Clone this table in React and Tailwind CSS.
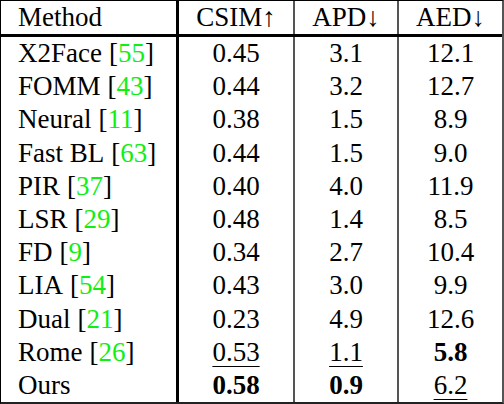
const rows = [
  { name: 'X2Face', ref: '55', csim: '0.45', apd: '3.1', aed: '12.1' },
  { name: 'FOMM', ref: '43', csim: '0.44', apd: '3.2', aed: '12.7' },
  { name: 'Neural', ref: '11', csim: '0.38', apd: '1.5', aed: '8.9' },
  { name: 'Fast BL', ref: '63', csim: '0.44', apd: '1.5', aed: '9.0' },
  { name: 'PIR', ref: '37', csim: '0.40', apd: '4.0', aed: '11.9' },
  { name: 'LSR', ref: '29', csim: '0.48', apd: '1.4', aed: '8.5' },
  { name: 'FD', ref: '9', csim: '0.34', apd: '2.7', aed: '10.4' },
  { name: 'LIA', ref: '54', csim: '0.43', apd: '3.0', aed: '9.9' },
  { name: 'Dual', ref: '21', csim: '0.23', apd: '4.9', aed: '12.6' },
  { name: 'Rome', ref: '26', csim: '0.53', apd: '1.1', aed: '5.8', u: ['csim', 'apd'], b: ['aed'] },
  { name: 'Ours', csim: '0.58', apd: '0.9', aed: '6.2', u: ['aed'], b: ['csim', 'apd'] },
]

const Val = ({ row, k }) => {
  const bold = row.b && row.b.includes(k)
  const under = row.u && row.u.includes(k)
  return (
    <span
      className={
        (bold ? 'font-bold ' : '') +
        (under ? 'underline decoration-[1px] underline-offset-[5px]' : '')
      }
    >
      {row[k]}
    </span>
  )
}

export default function App() {
  return (
    <div
      className="h-[404px] w-[504px] bg-white text-[27px] leading-none text-black"
      style={{ fontFamily: '"Liberation Serif", "Times New Roman", serif' }}
    >
      <div className="flex h-full w-full flex-col border-t border-b-2 border-l border-r-2 border-t-black border-b-[#222] border-l-black border-r-[#555]">
        <div className="flex h-[36px] border-b-[3px] border-black">
          <div className="flex w-[178px] items-center border-r-[3px] border-black pl-[17px]">Method</div>
          <div className="flex w-[116px] items-center justify-center border-r-2 border-[#555]">CSIM↑</div>
          <div className="flex w-[104px] items-center justify-center border-r-2 border-[#555]">APD↓</div>
          <div className="flex flex-1 items-center justify-center">AED↓</div>
        </div>
        <div className="flex flex-1 flex-col">
          {rows.map((row) => (
            <div key={row.name} className="flex flex-1">
              <div className="flex w-[178px] items-center border-r-[3px] border-black pl-[17px]">
                {row.name}
                {row.ref && (
                  <span className="ml-[7px]">
                    [<span className="text-[#11ee11]">{row.ref}</span>]
                  </span>
                )}
              </div>
              <div className="flex w-[116px] items-center justify-center border-r-2 border-[#555]">
                <Val row={row} k="csim" />
              </div>
              <div className="flex w-[104px] items-center justify-center border-r-2 border-[#555]">
                <Val row={row} k="apd" />
              </div>
              <div className="flex flex-1 items-center justify-center">
                <Val row={row} k="aed" />
              </div>
            </div>
          ))}
        </div>
      </div>
    </div>
  )
}
